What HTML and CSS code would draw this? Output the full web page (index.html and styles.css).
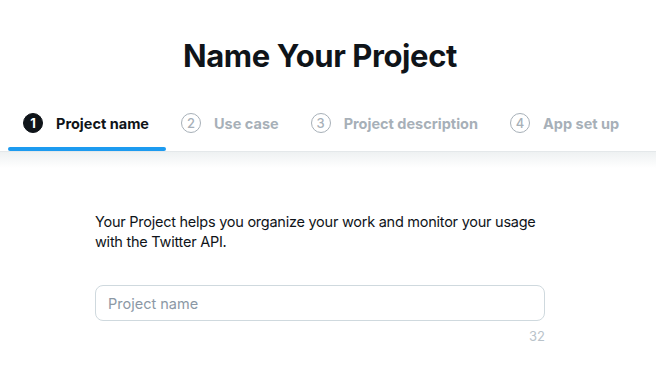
FILE: index.html
```html
<!DOCTYPE html>
<html lang="en">
<head>
  <meta charset="UTF-8">
  <meta name="viewport" content="width=device-width, initial-scale=1.0">
  <title>Name Your Project</title>
  <link rel="stylesheet" href="styles.css">
</head>
<body>

<header class="header">
  <h1 class="title">Name Your Project</h1>
  <nav class="steps">
    <div class="step active">
      <div class="step-label"><span class="step-num">1</span>Project name</div>
      <div class="step-bar"></div>
    </div>
    <div class="step">
      <div class="step-label"><span class="step-num">2</span>Use case</div>
      <div class="step-bar"></div>
    </div>
    <div class="step">
      <div class="step-label"><span class="step-num">3</span>Project description</div>
      <div class="step-bar"></div>
    </div>
    <div class="step">
      <div class="step-label"><span class="step-num">4</span>App set up</div>
      <div class="step-bar"></div>
    </div>
  </nav>
</header>

<main class="content">
  <div class="form">
    <p class="intro">Your Project helps you organize your work and monitor your usage with the Twitter API.</p>
    <input class="field" type="text" placeholder="Project name">
    <div class="counter">32</div>
  </div>
</main>

</body>
</html>
```

FILE: styles.css
```css
body {
  margin: 0;
  background: #fff;
  color: #0f1419;
  font-family: Inter, "Noto Sans", sans-serif;
}

.header {
  background: #fff;
}

.title {
  margin: 0;
  padding: 36px 16px 0 0;
  font-size: 31px;
  line-height: 40px;
  font-weight: 700;
  text-align: center;
  letter-spacing: -0.4px;
}

.steps {
  display: flex;
  padding-left: 8px;
  margin-top: 37px;
}

.step {
  display: flex;
  flex-direction: column;
}

.step-label {
  display: flex;
  align-items: center;
  height: 20px;
  padding: 0 17px 0 15px;
  font-size: 14.5px;
  font-weight: 700;
  color: #a7b0b8;
  white-space: nowrap;
}

.step-num {
  width: 18px;
  height: 18px;
  margin-right: 13px;
  border: 1px solid #a7b0b8;
  border-radius: 50%;
  display: flex;
  align-items: center;
  justify-content: center;
  font-size: 13px;
  font-weight: 500;
}

.step-bar {
  height: 4px;
  margin-top: 14px;
  border-radius: 2px;
}

.active .step-label {
  color: #0f1419;
}

.active .step-num {
  background: #0f1419;
  border-color: #0f1419;
  color: #fff;
  font-weight: 700;
}

.active .step-bar {
  background: #1d9bf0;
}

.content {
  border-top: 1px solid #e4e8ea;
  background: linear-gradient(#eef1f2, #fff 16px);
  padding-top: 60px;
}

.form {
  width: 450px;
  margin-left: 95px;
}

.intro {
  margin: 0;
  font-size: 14.5px;
  line-height: 20px;
  letter-spacing: -0.25px;
}

.field {
  display: block;
  box-sizing: border-box;
  width: 100%;
  height: 36px;
  margin-top: 33px;
  padding: 0 12px;
  border: 1px solid #cfd9de;
  border-radius: 8px;
  font-family: Inter, "Noto Sans", sans-serif;
  font-size: 14.5px;
  color: #0f1419;
  outline: none;
}

.field::placeholder {
  color: #8b98a5;
}

.counter {
  margin-top: 7px;
  text-align: right;
  font-size: 13px;
  color: #b9c3ca;
}
```
